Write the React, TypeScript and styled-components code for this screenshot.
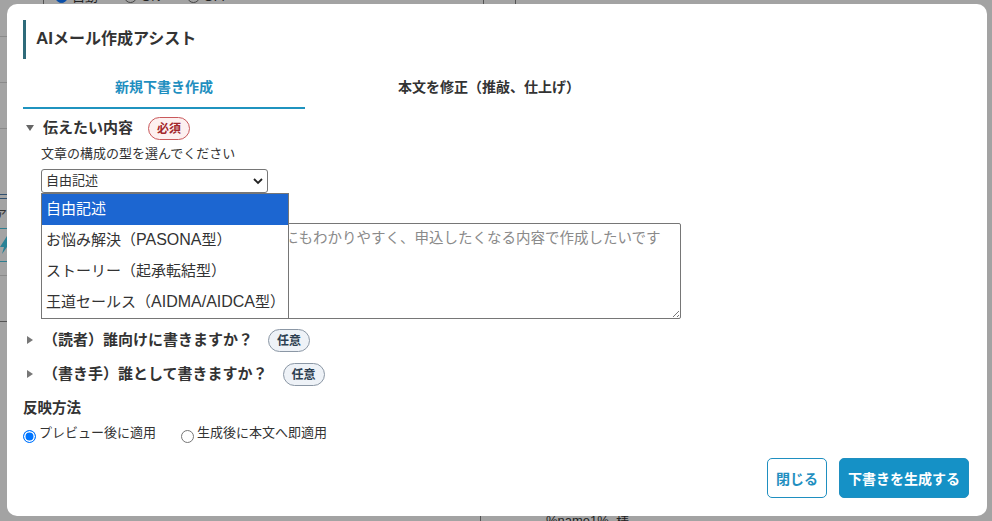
import React from "react";
import styled, { createGlobalStyle } from "styled-components";

const GlobalStyle = createGlobalStyle`
  html, body {
    margin: 0;
    padding: 0;
    background: #a3a3a3;
    font-family: "Liberation Sans", "Noto Sans CJK JP", sans-serif;
    overflow: hidden;
  }
`;

const Backdrop = styled.div`
  position: relative;
  width: 992px;
  height: 521px;
  padding: 4px 5px 5px 7px;
  box-sizing: border-box;
  background: #a3a3a3;
  overflow: hidden;
`;

// page behind the modal: only slivers of it show at the edges
const BehindRow = styled.div`
  position: absolute;
  top: -11px;
  left: 55px;
  display: flex;
  align-items: center;
  font-size: 13px;
  line-height: 15px;
  color: #222;
`;

const BehindRadio = styled.span<{ checked?: boolean }>`
  width: 13px;
  height: 13px;
  margin: 0 4px 0 ${({ checked }) => (checked ? "0" : "26px")};
  box-sizing: border-box;
  border-radius: 50%;
  border: 1px solid ${({ checked }) => (checked ? "#0b4fa8" : "#444")};
  background: ${({ checked }) => (checked ? "#0b4fa8" : "transparent")};
`;

const EdgeRule = styled.div<{ top: number; color: string }>`
  position: absolute;
  left: 0;
  top: ${({ top }) => top}px;
  width: 7px;
  height: 1px;
  background: ${({ color }) => color};
`;

const VLine = styled.div<{ x: number; bottom?: boolean }>`
  position: absolute;
  left: ${({ x }) => x}px;
  width: 1px;
  height: 5px;
  background: #555;
  ${({ bottom }) => (bottom ? "bottom: 0;" : "top: 0;")}
`;

const EdgeGlyph = styled.span`
  position: absolute;
  left: -6px;
  top: 207px;
  font-size: 13px;
  line-height: 15px;
  color: #333;
`;

const EdgeBolt = styled.svg`
  position: absolute;
  left: 0;
  top: 236px;
  width: 7px;
  height: 18px;
`;

const BehindFoot = styled.span`
  position: absolute;
  left: 546px;
  top: 513px;
  font-size: 13px;
  line-height: 15px;
  white-space: nowrap;
  color: #222;
`;

const Modal = styled.div`
  position: relative;
  z-index: 1;
  width: 100%;
  height: 100%;
  box-sizing: border-box;
  background: #fff;
  border-radius: 10px;
  padding: 16px 16px 0;
  display: flex;
  flex-direction: column;
  color: #333;
`;

const Latin = styled.span<{ size: number }>`
  font-size: ${({ size }) => size}px;
`;

const Title = styled.h2`
  margin: 0;
  height: 39px;
  border-left: 3px solid #2f6b7a;
  padding-left: 10px;
  font-size: 16px;
  font-weight: 700;
  line-height: 38px;
  color: #333;
`;

const Tabs = styled.div`
  display: flex;
  margin-top: 7px;
`;

const Tab = styled.div<{ active?: boolean }>`
  width: ${({ active }) => (active ? "282px" : "368px")};
  height: 43px;
  box-sizing: border-box;
  text-align: center;
  font-size: 14px;
  font-weight: 700;
  line-height: 42px;
  color: ${({ active }) => (active ? "#1f8fc0" : "#333")};
  border-bottom: 2px solid ${({ active }) => (active ? "#1f93bf" : "transparent")};
`;

const SectionHead = styled.div<{ first?: boolean }>`
  display: flex;
  align-items: center;
  height: ${({ first }) => (first ? "24px" : "34px")};
  margin-top: ${({ first }) => (first ? "7px" : "0")};
  font-size: 15px;
  font-weight: 700;
  color: #333;
`;

const HeadText = styled.span`
  margin-bottom: 3px;
`;

const Arrow = styled.span<{ open?: boolean }>`
  width: 0;
  height: 0;
  margin-left: ${({ open }) => (open ? "3px" : "4px")};
  margin-right: ${({ open }) => (open ? "9px" : "10px")};
  border-style: solid;
  ${({ open }) =>
    open
      ? "border-width: 6px 4px 0 4px; border-color: #666 transparent transparent transparent;"
      : "border-width: 4px 0 4px 6px; border-color: transparent transparent transparent #777;"}
`;

const Badge = styled.span<{ required?: boolean }>`
  display: inline-block;
  margin-left: 15px;
  width: 42px;
  height: 23px;
  box-sizing: border-box;
  border-radius: 12px;
  text-align: center;
  font-size: 12px;
  line-height: 23px;
  font-weight: 700;
  color: ${({ required }) => (required ? "#a3262b" : "#2c3e50")};
  background: ${({ required }) => (required ? "#fdf0f0" : "#eef2f7")};
  border: 1px solid ${({ required }) => (required ? "#c9595c" : "#8b97a5")};
`;

const Body = styled.div`
  position: relative;
  padding-left: 18px;
  margin-bottom: 4px;
`;

const Hint = styled.div`
  font-size: 13px;
  line-height: 18px;
  margin-top: 5px;
  color: #333;
`;

const SelectBox = styled.div`
  position: relative;
  width: 227px;
  height: 24px;
  margin-top: 6px;
  box-sizing: border-box;
  border: 1px solid #767676;
  border-radius: 3px;
  background: #fff;
  font-size: 13px;
  line-height: 22px;
  padding-left: 4px;
  color: #333;
`;

const Chevron = styled.svg`
  position: absolute;
  right: 4px;
  top: 7px;
  width: 10px;
  height: 8px;
`;

const Dropdown = styled.ul`
  position: absolute;
  left: 18px;
  top: 53px;
  z-index: 2;
  width: 248px;
  margin: 0;
  padding: 0;
  box-sizing: border-box;
  list-style: none;
  background: #fff;
  border: 1px solid #767676;
`;

const Option = styled.li<{ selected?: boolean }>`
  height: 31px;
  padding-left: 4px;
  font-size: 15px;
  line-height: 29px;
  white-space: nowrap;
  color: ${({ selected }) => (selected ? "#fff" : "#333")};
  background: ${({ selected }) => (selected ? "#1c66d1" : "#fff")};
`;

const TextArea = styled.div`
  position: relative;
  width: 640px;
  height: 96px;
  margin-top: 30px;
  box-sizing: border-box;
  border: 1px solid #767676;
  border-radius: 2px;
  padding: 4px 10px;
  font-size: 14.5px;
  line-height: 20px;
  color: #8a8a8a;
  white-space: nowrap;
`;

const Grip = styled.svg`
  position: absolute;
  right: 0;
  bottom: 0;
  width: 9px;
  height: 9px;
`;

const Label = styled.div`
  font-size: 14.5px;
  font-weight: 700;
  line-height: 18px;
  margin-top: 8px;
  color: #333;
`;

const RadioRow = styled.div`
  display: flex;
  align-items: flex-start;
  margin-top: 7px;
  font-size: 13px;
  line-height: 18px;
  color: #333;
`;

const RadioLabel = styled.label`
  display: flex;
  margin-right: 25px;
`;

const RadioDot = styled.span<{ checked?: boolean }>`
  width: 13px;
  height: 13px;
  margin-top: 6px;
  margin-right: 3px;
  box-sizing: border-box;
  border-radius: 50%;
  border: 1px solid ${({ checked }) => (checked ? "#0075ff" : "#767676")};
  background: ${({ checked }) => (checked ? "#0075ff" : "#fff")};
  box-shadow: ${({ checked }) => (checked ? "inset 0 0 0 1.5px #fff" : "none")};
`;

const Footer = styled.div`
  position: absolute;
  right: 18px;
  bottom: 18px;
  display: flex;
  gap: 12px;
`;

const Button = styled.button<{ primary?: boolean }>`
  height: 40px;
  box-sizing: border-box;
  padding: 0 8px;
  border-radius: 5px;
  font-family: inherit;
  font-size: 14px;
  font-weight: 700;
  color: ${({ primary }) => (primary ? "#fff" : "#1f8fc0")};
  background: ${({ primary }) => (primary ? "#1591c6" : "#fff")};
  border: 1px solid #1f8fc0;
`;

const App: React.FC = () => {
  return (
    <>
      <GlobalStyle />
      <Backdrop>
        <BehindRow>
          <BehindRadio checked />
          自動
          <BehindRadio />
          ON
          <BehindRadio />
          OFF
        </BehindRow>
        <VLine x={43} />
        <VLine x={483} />
        <VLine x={515} />
        <EdgeRule top={36} color="#8a8a8a" />
        <EdgeRule top={82} color="#8a8a8a" />
        <EdgeRule top={128} color="#8a8a8a" />
        <EdgeRule top={194} color="#2f4f6f" />
        <EdgeRule top={198} color="#2f4f6f" />
        <EdgeGlyph>ア</EdgeGlyph>
        <EdgeRule top={228} color="#2f7f90" />
        <EdgeBolt viewBox="0 0 7 18">
          <path d="M7 0L0 11h4l-2 7 5-7z" fill="#2a8296" />
        </EdgeBolt>
        <EdgeRule top={261} color="#2f7f90" />
        <EdgeRule top={275} color="#8a8a8a" />
        <EdgeRule top={321} color="#555" />
        <VLine x={480} bottom />
        <BehindFoot>%name1%, 様</BehindFoot>
        <Modal>
          <Title>
            <Latin size={17}>AI</Latin>メール作成アシスト
          </Title>
          <Tabs>
            <Tab active>新規下書き作成</Tab>
            <Tab>本文を修正（推敲、仕上げ）</Tab>
          </Tabs>
          <SectionHead first>
            <Arrow open />
            <HeadText>伝えたい内容</HeadText>
            <Badge required>必須</Badge>
          </SectionHead>
          <Body>
            <Hint>文章の構成の型を選んでください</Hint>
            <SelectBox>
              自由記述
              <Chevron viewBox="0 0 10 8">
                <path d="M1 2l4 4 4-4" fill="none" stroke="#222" strokeWidth="1.8" />
              </Chevron>
            </SelectBox>
            <Dropdown>
              <Option selected>自由記述</Option>
              <Option>
                お悩み解決（<Latin size={16}>PASONA</Latin>型）
              </Option>
              <Option>ストーリー（起承転結型）</Option>
              <Option>
                王道セールス（<Latin size={16}>AIDMA/AIDCA</Latin>型）
              </Option>
            </Dropdown>
            <TextArea>
              例：サービスの魅力を、初めての方にもわかりやすく、申込したくなる内容で作成したいです
              <Grip viewBox="0 0 9 9">
                <path d="M8 2L2 8M8 6L6 8" stroke="#777" strokeWidth="1" />
              </Grip>
            </TextArea>
          </Body>
          <SectionHead>
            <Arrow />
            <HeadText>（読者）誰向けに書きますか？</HeadText>
            <Badge>任意</Badge>
          </SectionHead>
          <SectionHead>
            <Arrow />
            <HeadText>（書き手）誰として書きますか？</HeadText>
            <Badge>任意</Badge>
          </SectionHead>
          <Label>反映方法</Label>
          <RadioRow>
            <RadioLabel>
              <RadioDot checked />
              プレビュー後に適用
            </RadioLabel>
            <RadioLabel>
              <RadioDot />
              生成後に本文へ即適用
            </RadioLabel>
          </RadioRow>
          <Footer>
            <Button>閉じる</Button>
            <Button primary>下書きを生成する</Button>
          </Footer>
        </Modal>
      </Backdrop>
    </>
  );
};

export default App;
